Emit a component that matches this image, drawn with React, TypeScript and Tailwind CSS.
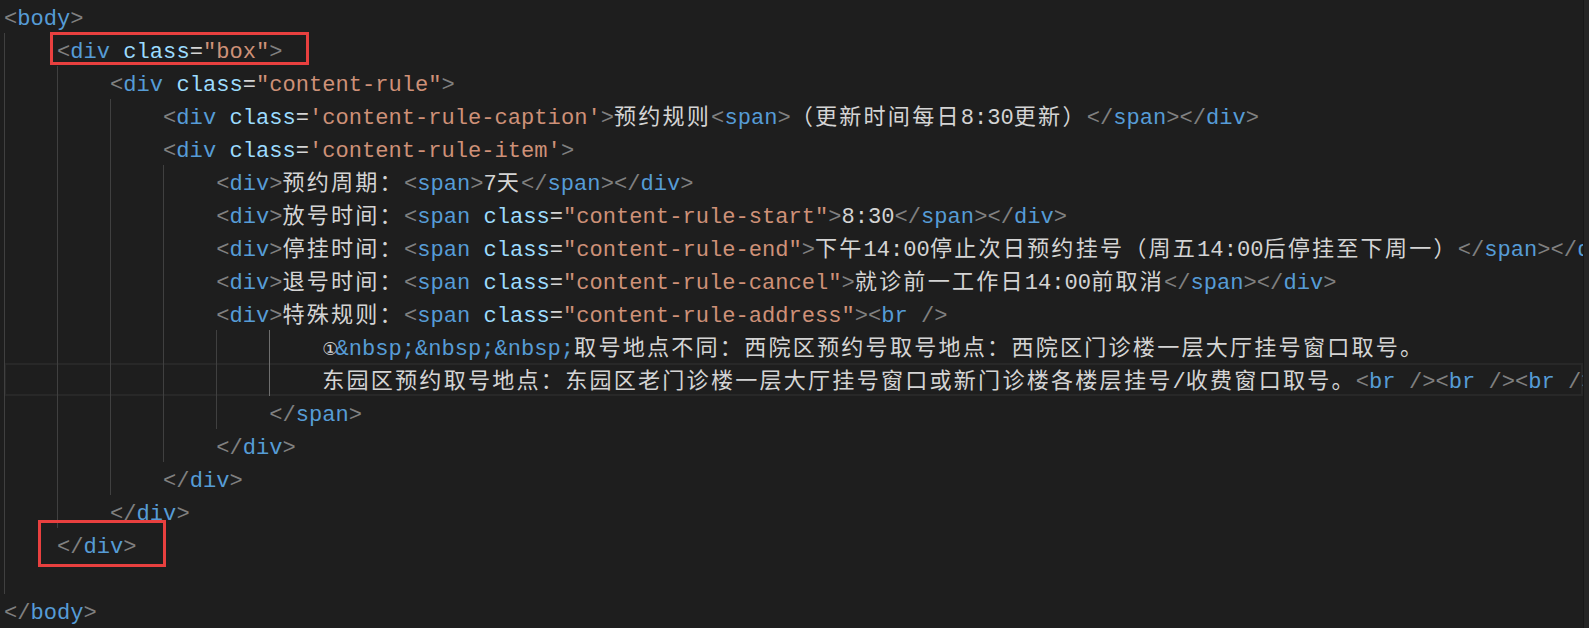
import React from "react";

type Kind = "p" | "t" | "a" | "e" | "s" | "x" | "n";
type Tok = [Kind, string];

const color: Record<Kind, string> = {
  p: "text-[#808080]",
  t: "text-[#569cd6]",
  a: "text-[#9cdcfe]",
  e: "text-[#d4d4d4]",
  s: "text-[#ce9178]",
  x: "text-[#d4d4d4]",
  n: "text-[#569cd6]",
};

// small helpers to write the html source as tokens
const open = (name: string, attr?: [string, string]): Tok[] =>
  attr
    ? [["p", "<"], ["t", name], ["x", " "], ["a", attr[0]], ["e", "="], ["s", attr[1]], ["p", ">"]]
    : [["p", "<"], ["t", name], ["p", ">"]];
const close = (name: string): Tok[] => [["p", "</"], ["t", name], ["p", ">"]];
const br: Tok[] = [["p", "<"], ["t", "br"], ["x", " "], ["p", "/>"]];
const txt = (s: string): Tok[] => [["x", s]];

type Line = { indent: number; toks: Tok[]; current?: boolean };

const lines: Line[] = [
  { indent: 0, toks: open("body") },
  { indent: 1, toks: open("div", ["class", '"box"']) },
  { indent: 2, toks: open("div", ["class", '"content-rule"']) },
  {
    indent: 3,
    toks: [
      ...open("div", ["class", "'content-rule-caption'"]),
      ...txt("预约规则"),
      ...open("span"),
      ...txt("（更新时间每日8:30更新）"),
      ...close("span"),
      ...close("div"),
    ],
  },
  { indent: 3, toks: open("div", ["class", "'content-rule-item'"]) },
  { indent: 4, toks: [...open("div"), ...txt("预约周期："), ...open("span"), ...txt("7天"), ...close("span"), ...close("div")] },
  {
    indent: 4,
    toks: [...open("div"), ...txt("放号时间："), ...open("span", ["class", '"content-rule-start"']), ...txt("8:30"), ...close("span"), ...close("div")],
  },
  {
    indent: 4,
    toks: [
      ...open("div"),
      ...txt("停挂时间："),
      ...open("span", ["class", '"content-rule-end"']),
      ...txt("下午14:00停止次日预约挂号（周五14:00后停挂至下周一）"),
      ...close("span"),
      ...close("div"),
    ],
  },
  {
    indent: 4,
    toks: [
      ...open("div"),
      ...txt("退号时间："),
      ...open("span", ["class", '"content-rule-cancel"']),
      ...txt("就诊前一工作日14:00前取消"),
      ...close("span"),
      ...close("div"),
    ],
  },
  { indent: 4, toks: [...open("div"), ...txt("特殊规则："), ...open("span", ["class", '"content-rule-address"']), ...br] },
  {
    indent: 6,
    toks: [["x", "①"], ["n", "&nbsp;&nbsp;&nbsp;"], ...txt("取号地点不同：西院区预约号取号地点：西院区门诊楼一层大厅挂号窗口取号。")],
  },
  {
    indent: 6,
    current: true,
    toks: [...txt("东园区预约取号地点：东园区老门诊楼一层大厅挂号窗口或新门诊楼各楼层挂号/收费窗口取号。"), ...br, ...br, ...br, ...br, ...br],
  },
  { indent: 5, toks: close("span") },
  { indent: 4, toks: close("div") },
  { indent: 3, toks: close("div") },
  { indent: 2, toks: close("div") },
  { indent: 1, toks: close("div") },
  { indent: 1, toks: [] },
  { indent: 0, toks: close("body") },
];

const wide = /[\u3000-\u303f\u4e00-\u9fff\uff00-\uffef]/;

function Runs({ text, cls }: { text: string; cls: string }) {
  const runs = text.match(/[\u3000-\u303f\u4e00-\u9fff\uff00-\uffef]+|①|[^\u3000-\u303f\u4e00-\u9fff\uff00-\uffef①]+/g) || [];
  return (
    <>
      {runs.map((r, i) => {
        if (r === "①")
          return (
            <span key={i} className={`${cls} inline-block w-[13.26px] text-[18px] font-['DejaVu_Sans',sans-serif] leading-[20px]`}>
              ①
            </span>
          );
        if (wide.test(r))
          return (
            <span key={i} className={`${cls} tracking-[2.2px] leading-[20px]`}>
              {r}
            </span>
          );
        return (
          <span key={i} className={cls}>
            {r}
          </span>
        );
      })}
    </>
  );
}

function CodeLine({ line, n }: { line: Line; n: number }) {
  return (
    <div className={`relative flex h-[33px] shrink-0 ${line.current ? "shadow-[inset_0_0_0_2px_#282828]" : ""}`}>
      {Array.from({ length: line.indent }).map((_, i) => (
        <div
          key={i}
          className={`h-full w-[53.04px] shrink-0 border-l ${line.indent === 6 && i === 5 ? "border-[#6e6e6e]" : "border-[#404040]"}`}
        />
      ))}
      <div className="whitespace-pre pt-[6px] leading-[27px]">
        {line.toks.map(([k, s], i) => (
          <Runs key={i} text={s} cls={color[k]} />
        ))}
      </div>
      {n === 1 && <div className="absolute left-[46px] top-[-1px] h-[33px] w-[259px] border-[3px] border-[#e8403f]" />}
      {n === 16 && <div className="absolute left-[34px] top-[-8px] h-[47px] w-[128px] border-[3px] border-[#e8403f]" />}
    </div>
  );
}

export default function App() {
  return (
    <div className="flex h-[628px] w-full overflow-hidden bg-[#1e1e1e] font-['Liberation_Mono','Noto_Sans_CJK_SC',monospace] text-[22.1px]">
      <div className="flex min-w-0 flex-1 flex-col overflow-hidden pl-[4px]">
        {lines.map((l, i) => (
          <CodeLine key={i} line={l} n={i} />
        ))}
      </div>
      <div className="w-[6px] shrink-0 border-l border-[#181818] bg-[#252525]" />
    </div>
  );
}
